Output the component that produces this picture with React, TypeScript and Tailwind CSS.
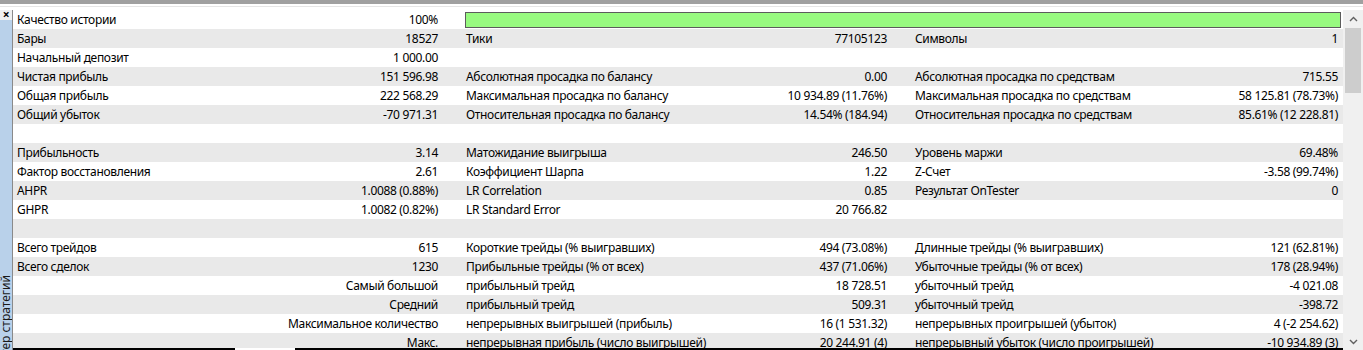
const rows: (string[] | null)[] = [
  ["Качество истории", "100%"],
  ["Бары", "18527", "Тики", "77105123", "Символы", "1"],
  ["Начальный депозит", "1 000.00", "", "", "", ""],
  ["Чистая прибыль", "151 596.98", "Абсолютная просадка по балансу", "0.00", "Абсолютная просадка по средствам", "715.55"],
  ["Общая прибыль", "222 568.29", "Максимальная просадка по балансу", "10 934.89 (11.76%)", "Максимальная просадка по средствам", "58 125.81 (78.73%)"],
  ["Общий убыток", "-70 971.31", "Относительная просадка по балансу", "14.54% (184.94)", "Относительная просадка по средствам", "85.61% (12 228.81)"],
  null,
  ["Прибыльность", "3.14", "Матожидание выигрыша", "246.50", "Уровень маржи", "69.48%"],
  ["Фактор восстановления", "2.61", "Коэффициент Шарпа", "1.22", "Z-Счет", "-3.58 (99.74%)"],
  ["AHPR", "1.0088 (0.88%)", "LR Correlation", "0.85", "Результат OnTester", "0"],
  ["GHPR", "1.0082 (0.82%)", "LR Standard Error", "20 766.82", "", ""],
  null,
  ["Всего трейдов", "615", "Короткие трейды (% выигравших)", "494 (73.08%)", "Длинные трейды (% выигравших)", "121 (62.81%)"],
  ["Всего сделок", "1230", "Прибыльные трейды (% от всех)", "437 (71.06%)", "Убыточные трейды (% от всех)", "178 (28.94%)"],
  ["", "Самый большой", "прибыльный трейд", "18 728.51", "убыточный трейд", "-4 021.08"],
  ["", "Средний", "прибыльный трейд", "509.31", "убыточный трейд", "-398.72"],
  ["", "Максимальное количество", "непрерывных выигрышей (прибыль)", "16 (1 531.32)", "непрерывных проигрышей (убыток)", "4 (-2 254.62)"],
  ["", "Макс.", "непрерывная прибыль (число выигрышей)", "20 244.91 (4)", "непрерывный убыток (число проигрышей)", "-10 934.89 (3)"],
];

const Chevron = ({ down }: { down?: boolean }) => (
  <svg width="9" height="6" viewBox="0 0 9 6" className={down ? "rotate-180" : ""}>
    <path d="M1 5 L4.5 1.5 L8 5" fill="none" stroke="#606060" strokeWidth="1.4" />
  </svg>
);

const Row = ({ cells, index }: { cells: string[] | null; index: number }) => {
  const bg = index % 2 === 0 ? "bg-white" : "bg-[#e9e9e9]";
  if (!cells) return <div className={`h-[19px] shrink-0 ${bg}`} />;
  if (cells.length === 2) {
    return (
      <div className={`h-[19px] shrink-0 flex items-center ${bg}`}>
        <div className="w-[449px] shrink-0 flex items-center pl-[4px] pr-[24px]">
          <span className="flex-1">{cells[0]}</span>
          <span>{cells[1]}</span>
        </div>
        <div className="flex-1 h-[16px] ml-[3px] mr-[2px] bg-[#98fa80] border border-[#5c5c5c]" />
      </div>
    );
  }
  return (
    <div className={`h-[19px] shrink-0 flex items-center whitespace-nowrap ${bg}`}>
      <div className="w-[449px] shrink-0 flex items-center pl-[4px] pr-[24px]">
        <span className="flex-1">{cells[0]}</span>
        <span>{cells[1]}</span>
      </div>
      <div className="w-[449px] shrink-0 flex items-center pl-[4px] pr-[24px]">
        <span className="flex-1">{cells[2]}</span>
        <span>{cells[3]}</span>
      </div>
      <div className="flex-1 flex items-center pl-[4px] pr-[5px]">
        <span className="flex-1">{cells[4]}</span>
        <span>{cells[5]}</span>
      </div>
    </div>
  );
};

export default function App() {
  return (
    <div className="w-[1363px] h-[350px] overflow-hidden bg-white flex flex-col text-[12px] tracking-[-0.33px] leading-[19px] text-black font-['Noto_Sans',sans-serif]">
      <div className="h-[4px] shrink-0 bg-[#a0a0a0]" />
      <div className="h-[2px] shrink-0 bg-white" />
      <div className="h-[1px] shrink-0 bg-[#e6e6e6]" />
      <div className="h-[3px] shrink-0 bg-white" />
      <div className="flex-1 flex min-h-0">
        <div className="w-[12px] shrink-0 flex flex-col">
          <div className="h-[10px] shrink-0 bg-[#f0f0f0] flex items-center justify-center text-[12px] font-bold leading-none">
            ×
          </div>
          <div className="flex-1 bg-[#b9d1ea] flex flex-col justify-end items-center overflow-hidden">
            <span className="[writing-mode:vertical-rl] rotate-180 leading-[12px] whitespace-nowrap -mb-[24px] text-[12px] tracking-normal text-[#1a1a1a]">
              Тестер стратегий
            </span>
          </div>
        </div>
        <div className="w-[1px] shrink-0 bg-[#8a8a8a]" />
        <div className="flex-1 flex flex-col min-w-0">
          <div className="flex-1 min-h-0 overflow-hidden flex flex-col">
            {rows.map((r, i) => (
              <Row key={i} cells={r} index={i} />
            ))}
          </div>
          <div className="h-[2px] shrink-0 flex">
            <div className="w-[222px] bg-black" />
            <div className="w-[60px] bg-white" />
            <div className="flex-1 bg-black" />
          </div>
        </div>
        <div className="w-[20px] shrink-0 bg-[#f0f0f0] flex flex-col items-center">
          <div className="h-[18px] shrink-0 flex items-center justify-center">
            <Chevron />
          </div>
          <div className="h-[65px] w-[16px] shrink-0 bg-[#cdcdcd]" />
          <div className="flex-1" />
          <div className="h-[16px] shrink-0 flex items-center justify-center">
            <Chevron down />
          </div>
        </div>
      </div>
    </div>
  );
}
